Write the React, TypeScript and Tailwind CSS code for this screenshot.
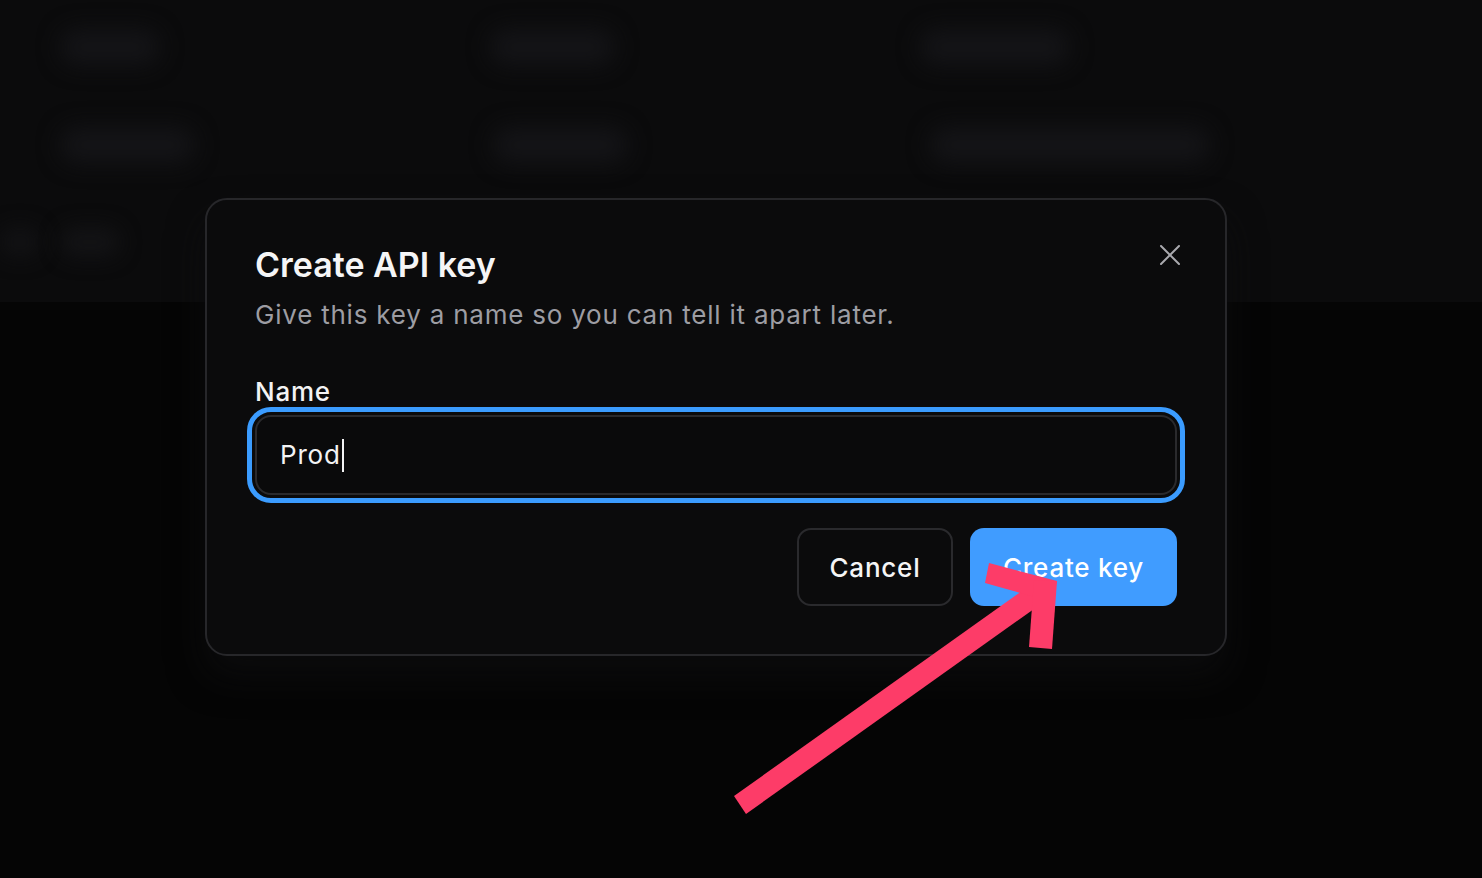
import React from "react";

function Pill({ w, className = "" }: { w: string; className?: string }) {
  return <div className={`h-[36px] rounded-full bg-[#141417] blur-[11px] ${w} ${className}`} />;
}

export default function App() {
  return (
    <div className="relative h-[878px] w-[1482px] overflow-hidden bg-[#050505] font-['Inter',sans-serif]">
      {/* blurred page content behind overlay */}
      <div className="h-[302px] bg-[#0b0b0c] pl-[60px] pt-[29px]">
        <div className="grid grid-cols-[418px_432px_1fr] gap-y-[62px]">
          <Pill w="w-[100px]" />
          <Pill w="w-[125px]" className="ml-[12px]" />
          <Pill w="w-[150px]" className="ml-[10px]" />
          <Pill w="w-[135px]" />
          <Pill w="w-[135px]" className="ml-[15px]" />
          <Pill w="w-[280px]" className="ml-[20px]" />
        </div>
        <div className="-ml-[60px] mt-[64px] flex items-center gap-[20px]">
          <div className="h-[30px] w-[40px] rounded-full bg-[#121214] blur-[10px]" />
          <div className="h-[30px] w-[60px] rounded-full bg-[#131315] blur-[10px]" />
        </div>
      </div>

      {/* dialog */}
      <div className="absolute left-[205px] top-[198px] w-[1022px] rounded-[22px] border-2 border-[#27272a] bg-[#0b0b0c] px-[48px] pb-[48px] pt-[45px] shadow-[0_20px_36px_rgba(13,13,15,0.75)]">
        <button className="absolute right-[42px] top-[42px] flex h-[26px] w-[26px] items-center justify-center text-[#a9a9ae]">
          <svg width="20" height="20" viewBox="0 0 20 20" fill="none" stroke="currentColor" strokeWidth="2" strokeLinecap="round">
            <path d="M1 1 L19 19 M19 1 L1 19" />
          </svg>
        </button>
        <h2 className="text-[34px] font-semibold leading-[40px] tracking-[0em] text-[#f5f5f6]">Create API key</h2>
        <p className="mt-[14px] text-[26px] leading-[32px] tracking-[0.03em] text-[#9d9da3]">Give this key a name so you can tell it apart later.</p>
        <label className="mt-[45px] block text-[26px] font-medium leading-[32px] tracking-[0.03em] text-[#f3f3f4]">Name</label>
        <div className="mt-[7px] flex h-[80px] items-center rounded-[16px] border-2 border-[#2a2a2d] bg-[#0a0a0b] pl-[23px] outline-[5px] outline-offset-[3px] outline-[#3b9cff]">
          <span className="text-[26px] leading-none tracking-[0.03em] text-[#f3f3f4]">Prod</span>
          <span className="ml-[1px] h-[33px] w-[2px] bg-[#f3f3f4]" />
        </div>
        <div className="mt-[33px] flex justify-end gap-[17px]">
          <button className="flex h-[78px] w-[156px] items-center justify-center rounded-[14px] border-2 border-[#2a2a2d] text-[26px] font-medium tracking-[0.03em] text-[#f5f5f6]">
            Cancel
          </button>
          <button className="flex h-[78px] w-[207px] items-center justify-center rounded-[14px] bg-[#409cff] text-[26px] font-medium tracking-[0.03em] text-white">
            Create key
          </button>
        </div>
      </div>

      {/* annotation arrow */}
      <svg className="pointer-events-none absolute left-0 top-0" width="1482" height="878" viewBox="0 0 1482 878">
        <g fill="#fd3c68">
          <polygon points="734,796 746,814 1041,604 1029,586" />
          <polygon points="989,563 1057,581 1052,602 985,583" />
          <polygon points="1057,581 1052,649 1029,647 1034,580" />
        </g>
      </svg>
    </div>
  );
}
